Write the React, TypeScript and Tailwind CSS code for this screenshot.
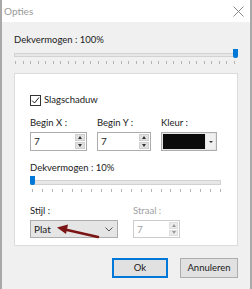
const font = { fontFamily: "Lato, 'Noto Sans', sans-serif" };

function Ticks({ count }: { count: number }) {
  return (
    <div className="flex justify-between h-[3px]">
      {Array.from({ length: count }).map((_, i) => (
        <span key={i} className="w-px h-[3px] bg-[#b4b4b4]" />
      ))}
    </div>
  );
}

function Spin({ value, width }: { value: string; width: string }) {
  return (
    <div className={`flex h-[19px] border border-[#acacac] bg-white ${width}`}>
      <span className="flex-1 pl-[3px] text-[10px] leading-[17px] text-[#222]">{value}</span>
      <div className="flex flex-col w-[10px] mr-px my-px gap-px">
        <span className="flex-1 flex items-center justify-center bg-[#e1e1e1] border border-[#cfcfcf]">
          <span className="border-x-[2px] border-x-transparent border-b-[3px] border-b-[#333]" />
        </span>
        <span className="flex-1 flex items-center justify-center bg-[#e1e1e1] border border-[#cfcfcf]">
          <span className="border-x-[2px] border-x-transparent border-t-[3px] border-t-[#333]" />
        </span>
      </div>
    </div>
  );
}

export default function App() {
  return (
    <div className="w-[252px] h-[289px] bg-[#f0f0f0] border-x-2 border-[#a9a9a9] overflow-hidden text-[#1a1a1a] text-[9.5px]" style={font}>
      <div className="h-[22px] bg-white flex items-center justify-between pl-[2px] pr-[6px]">
        <span className="text-[10px] text-[#9a9a9a]">Opties</span>
        <svg width="11" height="11" viewBox="0 0 11 11">
          <path d="M0.5 0.5 L10.5 10.5 M10.5 0.5 L0.5 10.5" stroke="#8a8a8a" strokeWidth="1" />
        </svg>
      </div>

      <div className="px-[12px]">
        <div className="mt-[10px] leading-[16px]">Dekvermogen : 100%</div>
        <div className="relative mt-[2px] h-[10px] flex items-center">
          <div className="w-full h-[4px] bg-[#e7e7e7] border border-[#d2d2d2]" />
          <div className="absolute right-0 top-[-1px] w-[5px] h-[9px] bg-[#0078d7] rounded-b-[2px]" />
        </div>
        <div className="mt-[1px] ml-[1px] mr-[3px]">
          <Ticks count={30} />
        </div>

        <div className="mt-[9px] h-[173px] bg-white border border-[#dcdcdc] pl-[15px] pr-[15px]">
          <div className="mt-[18px] flex items-center gap-[3px]">
            <span className="w-[11px] h-[11px] border border-[#333] flex items-center justify-center">
              <svg width="9" height="9" viewBox="0 0 9 9">
                <path d="M1 4.5 L3.5 7 L8 1.5" stroke="#222" strokeWidth="1" fill="none" />
              </svg>
            </span>
            <span className="leading-[16px]">Slagschaduw</span>
          </div>

          <div className="mt-[7px] flex gap-[10px]">
            <div className="flex flex-col gap-[1px]">
              <span className="leading-[16px]">Begin X :</span>
              <Spin value="7" width="w-[57px]" />
            </div>
            <div className="flex flex-col gap-[1px]">
              <span className="leading-[16px]">Begin Y :</span>
              <Spin value="7" width="w-[54px]" />
            </div>
            <div className="flex flex-col gap-[1px]">
              <span className="leading-[16px]">Kleur :</span>
              <div className="flex h-[19px] w-[56px] border border-[#acacac] bg-[#e6e6e6] p-px gap-px">
                <span className="flex-1 bg-[#0a0a0a]" />
                <span className="w-[9px] flex items-center justify-center bg-[#f0f0f0]">
                  <span className="border-x-[2px] border-x-transparent border-t-[2px] border-t-[#333]" />
                </span>
              </div>
            </div>
          </div>

          <div className="mt-[9px] leading-[16px]">Dekvermogen : 10%</div>
          <div className="relative mt-[1px] w-[191px] h-[10px] flex items-center">
            <div className="w-full h-[5px] bg-[#e7e7e7] border border-[#d2d2d2]" />
            <div className="absolute left-0 top-[-1px] w-[5px] h-[9px] bg-[#0078d7] rounded-b-[2px]" />
          </div>
          <div className="mt-[2px] ml-[2px] w-[189px]">
            <Ticks count={20} />
          </div>

          <div className="mt-[11px] flex gap-[15px]">
            <div className="relative flex flex-col gap-[1px]">
              <span className="leading-[16px]">Stijl :</span>
              <div className="flex items-center justify-between h-[18px] w-[88px] border border-[#adadad] bg-[#e5e5e5] pl-[3px] pr-[4px]">
                <span className="text-[10px] leading-[16px]">Plat</span>
                <svg width="8" height="5" viewBox="0 0 8 5">
                  <path d="M0.5 0.5 L4 4 L7.5 0.5" stroke="#555" strokeWidth="1" fill="none" />
                </svg>
              </div>
              <svg className="absolute left-[26px] top-[21px]" width="44" height="15" viewBox="0 0 44 15">
                <path d="M42 13 L9 5.5" stroke="#7b1414" strokeWidth="2.6" strokeLinecap="round" />
                <path d="M1 3.5 L12 0.5 L10 10 Z" fill="#7b1414" />
              </svg>
            </div>
            <div className="flex flex-col gap-[1px]">
              <span className="leading-[16px] text-[#a0a0a0]">Straal :</span>
              <div className="flex h-[18px] w-[47px] border border-[#cccccc] bg-white">
                <span className="flex-1 pl-[3px] text-[10px] leading-[16px] text-[#a0a0a0]">7</span>
                <div className="flex flex-col w-[9px] mr-px my-px gap-px">
                  <span className="flex-1 flex items-center justify-center bg-[#ececec] border border-[#dedede]">
                    <span className="border-x-[2px] border-x-transparent border-b-[3px] border-b-[#999]" />
                  </span>
                  <span className="flex-1 flex items-center justify-center bg-[#ececec] border border-[#dedede]">
                    <span className="border-x-[2px] border-x-transparent border-t-[3px] border-t-[#999]" />
                  </span>
                </div>
              </div>
            </div>
          </div>
        </div>

        <div className="mt-[12px] flex justify-end gap-[12px]">
          <button className="w-[56px] h-[20px] border-2 border-[#0078d7] bg-[#e1e1e1] leading-[14px]">Ok</button>
          <button className="w-[58px] h-[20px] border border-[#adadad] bg-[#e1e1e1] leading-[16px]">Annuleren</button>
        </div>
      </div>
    </div>
  );
}
